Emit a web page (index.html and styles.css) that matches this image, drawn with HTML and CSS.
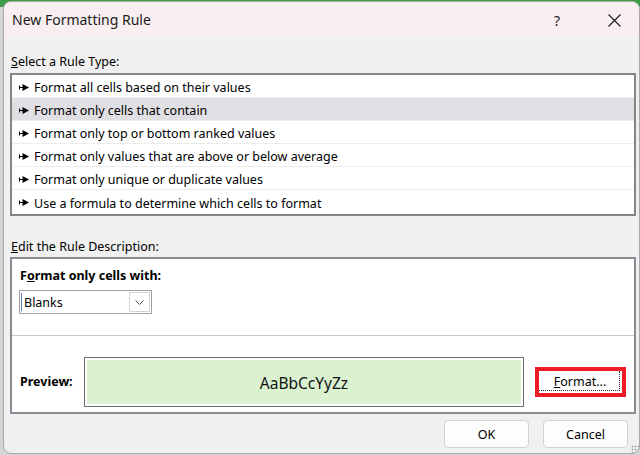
FILE: index.html
```html
<!DOCTYPE html>
<html>
<head>
<meta charset="utf-8">
<link rel="stylesheet" href="styles.css">
</head>
<body>
<div class="win">
  <div class="titlebar">
    <span class="title">New Formatting Rule</span>
    <span class="tb-btn help">?</span>
    <span class="tb-btn close"><svg width="13" height="13" viewBox="0 0 13 13"><path d="M0.5 0.5 L12.5 12.5 M12.5 0.5 L0.5 12.5" stroke="#1a1a1a" stroke-width="1.1" fill="none"/></svg></span>
  </div>
  <div class="content">
    <div class="label first"><u>S</u>elect a Rule Type:</div>
    <div class="list">
      <div class="row"><svg class="arr" width="10" height="7" viewBox="0 0 10 7"><rect x="0" y="1.5" width="1" height="4" fill="#000"/><rect x="0" y="3" width="5" height="1" fill="#000"/><path d="M3.5 0 L10 3.5 L3.5 7 Z" fill="#000"/></svg>Format all cells based on their values</div>
      <div class="row sel"><svg class="arr" width="10" height="7" viewBox="0 0 10 7"><rect x="0" y="1.5" width="1" height="4" fill="#000"/><rect x="0" y="3" width="5" height="1" fill="#000"/><path d="M3.5 0 L10 3.5 L3.5 7 Z" fill="#000"/></svg>Format only cells that contain</div>
      <div class="row"><svg class="arr" width="10" height="7" viewBox="0 0 10 7"><rect x="0" y="1.5" width="1" height="4" fill="#000"/><rect x="0" y="3" width="5" height="1" fill="#000"/><path d="M3.5 0 L10 3.5 L3.5 7 Z" fill="#000"/></svg>Format only top or bottom ranked values</div>
      <div class="row"><svg class="arr" width="10" height="7" viewBox="0 0 10 7"><rect x="0" y="1.5" width="1" height="4" fill="#000"/><rect x="0" y="3" width="5" height="1" fill="#000"/><path d="M3.5 0 L10 3.5 L3.5 7 Z" fill="#000"/></svg>Format only values that are above or below average</div>
      <div class="row"><svg class="arr" width="10" height="7" viewBox="0 0 10 7"><rect x="0" y="1.5" width="1" height="4" fill="#000"/><rect x="0" y="3" width="5" height="1" fill="#000"/><path d="M3.5 0 L10 3.5 L3.5 7 Z" fill="#000"/></svg>Format only unique or duplicate values</div>
      <div class="row"><svg class="arr" width="10" height="7" viewBox="0 0 10 7"><rect x="0" y="1.5" width="1" height="4" fill="#000"/><rect x="0" y="3" width="5" height="1" fill="#000"/><path d="M3.5 0 L10 3.5 L3.5 7 Z" fill="#000"/></svg>Use a formula to determine which cells to format</div>
    </div>
    <div class="label second"><u>E</u>dit the Rule Description:</div>
    <div class="desc">
      <div class="desc-top">
        <div class="bold">F<u>o</u>rmat only cells with:</div>
        <div class="select">
          <span class="caret"></span>
          <span class="sel-text">Blanks</span>
          <span class="chev"><svg width="9" height="5" viewBox="0 0 9 5"><path d="M0.5 0.5 L4.5 4.5 L8.5 0.5" stroke="#555" stroke-width="1" fill="none"/></svg></span>
        </div>
      </div>
      <div class="desc-bottom">
        <span class="bold prev-label">Preview:</span>
        <div class="preview"><div class="preview-inner">AaBbCcYyZz</div></div>
        <div class="hl"><div class="fmt-btn"><span><u>F</u>ormat...</span></div></div>
      </div>
    </div>
    <div class="buttons">
      <div class="btn">OK</div>
      <div class="btn">Cancel</div>
    </div>
  </div>
  <div class="grip"></div>
</div>
</body>
</html>
```
FILE: styles.css
```css
* { box-sizing: border-box; margin: 0; padding: 0; }
html, body { width: 640px; height: 455px; overflow: hidden; }
body {
  background: linear-gradient(#3d9c48 0 7px, #d4d4d4 7px);
  font-family: "Noto Sans", "Segoe UI", sans-serif;
  font-size: 12.5px;
  color: #000;
}
.win {
  position: relative;
  margin: 1px 0 0 3px;
  width: 637px;
  height: 453px;
  border: 1px solid #a9a9a9;
  border-radius: 8px;
  background: #f0f0f0;
  overflow: hidden;
  display: flex;
  flex-direction: column;
}
.titlebar {
  height: 36px;
  background: #f9eff0;
  display: flex;
  align-items: center;
  padding-right: 2px;
}
.title {
  flex: 1;
  padding-left: 8px;
  font-size: 14px;
  color: #1a1a1a;
  padding-bottom: 1px;
}
.tb-btn {
  width: 46px;
  height: 36px;
  display: flex;
  align-items: center;
  justify-content: center;
  font-size: 14px;
  color: #1a1a1a;
}
.help { margin-right: 11px; }
.close svg { display: block; }
.content {
  flex: 1;
  padding: 0 3px 0 6px;
  display: flex;
  flex-direction: column;
}
.label { line-height: 16px; padding-left: 1px; }
.label.first { margin-top: 16px; }
.list {
  margin-top: 3px;
  height: 143px;
  border: 2px solid #848484;
  background: #fff;
  display: flex;
  flex-direction: column;
}
.row {
  height: 23px;
  border-bottom: 1px solid #ececec;
  display: flex;
  align-items: center;
  padding-left: 7px;
  padding-top: 3px;
}
.row:last-child { border-bottom: none; }
.row.sel { background: #e0dfe3; }
.arr { margin-right: 5px; flex: none; margin-top: -1px; }
.label.second { margin-top: 23px; }
.desc {
  margin-top: 2px;
  height: 157px;
  border: 2px solid #8a8a94;
  background: #fff;
  display: flex;
  flex-direction: column;
}
.desc-top {
  padding: 9px 0 0 8px;
  height: 77px;
  border-bottom: 1px solid #c8c8c8;
}
.bold { font-weight: bold; line-height: 16px; }
.select {
  margin: 6px 0 0 -1px;
  width: 133px;
  height: 24px;
  border: 1px solid #a2a2a2;
  display: flex;
  align-items: center;
  padding: 1px;
}
.caret { width: 1px; height: 18px; background: #5c7fd0; margin-right: 2px; }
.sel-text { flex: 1; }
.chev {
  width: 21px;
  height: 20px;
  border: 1px solid #d4d4d4;
  display: flex;
  align-items: center;
  justify-content: center;
}
.chev svg { display: block; }
.desc-bottom {
  padding: 21px 0 0 8px;
  display: flex;
  align-items: center;
}
.prev-label { width: 64px; flex: none; }
.preview {
  width: 440px;
  height: 50px;
  border: 1px solid #6e6e6e;
  padding: 2px;
  flex: none;
}
.preview-inner {
  height: 100%;
  background: #daf2d0;
  display: flex;
  align-items: center;
  justify-content: center;
  font-size: 15.5px;
  color: #111;
  padding-top: 1px;
}
.hl {
  margin-left: 11px;
  width: 91px;
  height: 30px;
  border: 4px solid #ed1c24;
  flex: none;
}
.fmt-btn {
  background: #fdfdfd;
  border-right: 1px dotted #333;
  border-bottom: 1px dotted #333;
  margin-right: 2px;
  display: flex;
  align-items: center;
  justify-content: center;
  height: 20px;
  padding-left: 2px;
  padding-top: 1px;
}
.buttons {
  margin-top: 6px;
  display: flex;
  justify-content: flex-end;
  gap: 14px;
  padding-right: 8px;
}
.btn {
  width: 85px;
  height: 28px;
  border: 1px solid #d1d1d1;
  border-radius: 4px;
  background: #fdfdfd;
  display: flex;
  align-items: center;
  justify-content: center;
}
.grip {
  position: absolute;
  right: 0;
  bottom: 0;
  width: 8px;
  height: 8px;
  background-image: radial-gradient(circle, #9a9a9a 0.8px, transparent 1.1px);
  background-size: 3px 3px;
}
```
